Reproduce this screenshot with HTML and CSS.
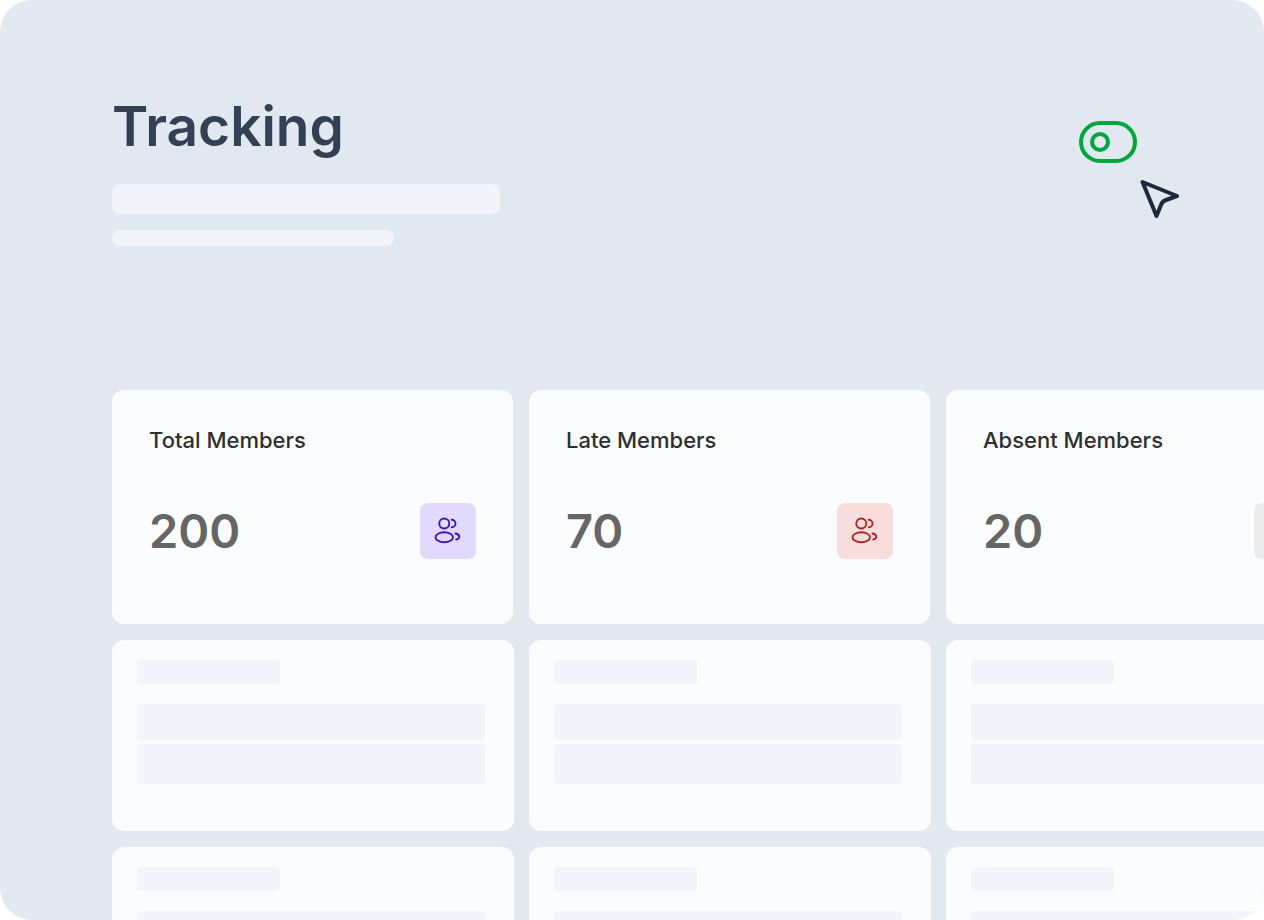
FILE: index.html
```html
<!DOCTYPE html>
<html lang="en">
<head>
  <meta charset="UTF-8" />
  <meta name="viewport" content="width=device-width, initial-scale=1.0" />
  <title>Tracking</title>
  <link rel="stylesheet" href="styles.css">
</head>
<body>

  <!-- Shared icon -->
  <svg class="sprite" aria-hidden="true">
    <symbol id="users" viewBox="0 0 24 24">
      <circle cx="9" cy="6" r="4" />
      <path d="M15 9a3 3 0 1 0 0-6" />
      <ellipse cx="9" cy="17" rx="7" ry="4" />
      <path d="M18 14c1.754.385 3 1.359 3 2.5 0 1.03-1.014 1.923-2.5 2.37" />
    </symbol>
  </svg>

  <main class="panel">
    <header class="header">
      <div class="intro">
        <h1>Tracking</h1>
        <div class="line line-long"></div>
        <div class="line line-short"></div>
      </div>
      <div class="control">
        <input type="checkbox" role="switch" class="toggle" aria-label="Tracking" />
        <svg class="cursor" viewBox="0 0 40 40" aria-hidden="true">
          <path d="M2.500 3L37 17l-11 4q-4 1.500-5 5L16.500 37z" />
        </svg>
      </div>
    </header>

    <section class="stats">
      <article class="stat">
        <h2>Total Members</h2>
        <div class="stat-row">
          <span class="number">200</span>
          <span class="icon purple"><svg><use href="#users" /></svg></span>
        </div>
      </article>
      <article class="stat">
        <h2>Late Members</h2>
        <div class="stat-row">
          <span class="number">70</span>
          <span class="icon red"><svg><use href="#users" /></svg></span>
        </div>
      </article>
      <article class="stat">
        <h2>Absent Members</h2>
        <div class="stat-row">
          <span class="number">20</span>
          <span class="icon gray"><svg><use href="#users" /></svg></span>
        </div>
      </article>
    </section>

    <section class="placeholders" aria-hidden="true">
      <div class="placeholder"><div class="bar bar-title"></div><div class="bar"></div><div class="bar bar-tall"></div></div>
      <div class="placeholder"><div class="bar bar-title"></div><div class="bar"></div><div class="bar bar-tall"></div></div>
      <div class="placeholder"><div class="bar bar-title"></div><div class="bar"></div><div class="bar bar-tall"></div></div>
      <div class="placeholder"><div class="bar bar-title"></div><div class="bar"></div><div class="bar bar-tall"></div></div>
      <div class="placeholder"><div class="bar bar-title"></div><div class="bar"></div><div class="bar bar-tall"></div></div>
      <div class="placeholder"><div class="bar bar-title"></div><div class="bar"></div><div class="bar bar-tall"></div></div>
    </section>
  </main>

</body>
</html>
```
FILE: styles.css
```css
*,
*::before {
  box-sizing: border-box;
}

body {
  margin: 0;
  background-color: #fff;
  font-family: Inter, sans-serif;
}

.sprite {
  display: none;
}

.panel {
  height: 100vh;
  padding: 92px 0 0 112px;
  background-color: #e2e8f0;
  border-radius: 32px;
  overflow: hidden;
}

/* Header */
.header {
  display: flex;
  justify-content: space-between;
  padding-right: 127px;
  margin-bottom: 144px;
}

h1 {
  margin: 0 0 24px;
  font-size: 55px;
  line-height: 68px;
  font-weight: 600;
  color: #334155;
}

.line {
  background-color: #f1f5fa;
  border-radius: 8px;
}

.line-long {
  width: 388px;
  height: 30px;
  margin-bottom: 16px;
}

.line-short {
  width: 282px;
  height: 16px;
}

.control {
  position: relative;
  margin-top: 29px;
}

.toggle {
  appearance: none;
  display: flex;
  align-items: center;
  width: 58px;
  height: 42px;
  margin: 0;
  padding: 0 7px;
  border: 4px solid #00a63e;
  border-radius: 21px;
}

.toggle::before {
  content: "";
  width: 20px;
  height: 20px;
  border: 4px solid #00a63e;
  border-radius: 50%;
}

.toggle:checked {
  justify-content: flex-end;
}

.cursor {
  position: absolute;
  top: 58px;
  left: 61px;
  width: 40px;
  height: 40px;
  fill: none;
  stroke: #1d293d;
  stroke-width: 4;
  stroke-linejoin: round;
}

/* Both grids run past the right edge of the panel */
.stats {
  display: grid;
  grid-template-columns: repeat(3, 1fr);
  gap: 16px;
  margin: 0 -83px 16px 0;
}

.stat {
  padding: 36px 37px 65px;
  background-color: #fafcfd;
  border-radius: 12px;
}

h2 {
  margin: 0 0 49px;
  font-size: 22px;
  line-height: 28px;
  font-weight: 500;
  color: #2e2f30;
}

.stat-row {
  display: flex;
  align-items: center;
  justify-content: space-between;
}

.number {
  font-size: 47px;
  line-height: 56px;
  font-weight: 600;
  color: #666;
}

.icon {
  display: flex;
  align-items: center;
  justify-content: center;
  width: 56px;
  height: 56px;
  border-radius: 8px;
}

.icon svg {
  width: 30px;
  height: 30px;
  fill: none;
  stroke: currentColor;
  stroke-width: 1.5;
  stroke-linecap: round;
}

.purple {
  background-color: #e2dafc;
  color: #3e14b4;
}

.red {
  background-color: #f9dddd;
  color: #b4201f;
}

.gray {
  background-color: #ebebed;
  color: #555;
}

/* Empty cards */
.placeholders {
  display: grid;
  grid-template-columns: repeat(3, 1fr);
  gap: 16px 15px;
  margin-right: -84px;
}

.placeholder {
  padding: 20px 29px 47px 25px;
  background-color: #fafcfd;
  border-radius: 12px;
}

.bar {
  height: 36px;
  margin-bottom: 4px;
  background-color: #f1f5f9;
  border-radius: 4px;
}

.bar-title {
  width: 143px;
  height: 24px;
  margin-bottom: 20px;
}

.bar-tall {
  height: 40px;
  margin-bottom: 0;
}
```
